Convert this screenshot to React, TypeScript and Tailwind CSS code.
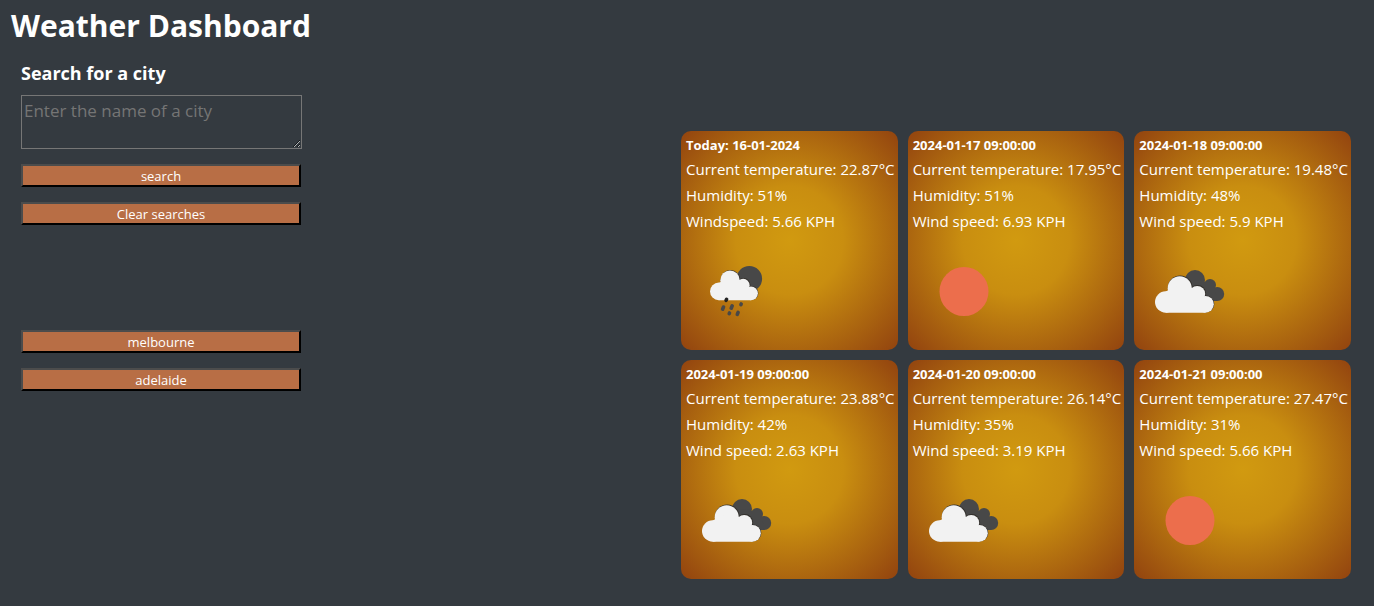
import React from "react";

type Sky = "rain" | "clear" | "clouds";

interface Forecast {
  title: string;
  temperature: string;
  humidity: string;
  windLabel: string;
  wind: string;
  sky: Sky;
}

const forecasts: Forecast[] = [
  { title: "Today: 16-01-2024", temperature: "22.87", humidity: "51", windLabel: "Windspeed", wind: "5.66", sky: "rain" },
  { title: "2024-01-17 09:00:00", temperature: "17.95", humidity: "51", windLabel: "Wind speed", wind: "6.93", sky: "clear" },
  { title: "2024-01-18 09:00:00", temperature: "19.48", humidity: "48", windLabel: "Wind speed", wind: "5.9", sky: "clouds" },
  { title: "2024-01-19 09:00:00", temperature: "23.88", humidity: "42", windLabel: "Wind speed", wind: "2.63", sky: "clouds" },
  { title: "2024-01-20 09:00:00", temperature: "26.14", humidity: "35", windLabel: "Wind speed", wind: "3.19", sky: "clouds" },
  { title: "2024-01-21 09:00:00", temperature: "27.47", humidity: "31", windLabel: "Wind speed", wind: "5.66", sky: "clear" },
];

const recentCities = ["melbourne", "adelaide"];

function CloudsIcon() {
  return (
    <>
      <g fill="#484848">
        <circle cx="56" cy="39" r="10" />
        <circle cx="71" cy="44" r="6" />
        <circle cx="78.2" cy="53" r="7" />
        <path d="M50 39 L64 40 L76 46 L78 60 L60 60 Z" />
      </g>
      <g fill="#33302c">
        <circle cx="41.2" cy="46.8" r="12.4" />
        <circle cx="58.6" cy="52.6" r="8.5" />
        <circle cx="66.8" cy="63" r="8.5" />
      </g>
      <g fill="#f2f2f2">
        <circle cx="26.7" cy="61" r="10.7" />
        <circle cx="40.7" cy="47.2" r="12" />
        <circle cx="58.2" cy="53" r="8" />
        <circle cx="66.4" cy="63.3" r="8.4" />
        <path d="M26.7 50.5 L40 44 L58 48 L67 60 L66.4 71.7 H26.7 Z" />
      </g>
    </>
  );
}

function RainIcon() {
  return (
    <>
      <circle cx="63.3" cy="37.8" r="12.8" fill="#484848" />
      <g fill="#33302c">
        <circle cx="44.4" cy="38.9" r="9.9" />
        <circle cx="57.6" cy="43.8" r="6.8" />
        <circle cx="65.4" cy="52" r="7" />
      </g>
      <g fill="#f2f2f2">
        <circle cx="32.8" cy="50.4" r="8.8" />
        <circle cx="44" cy="39.2" r="9.7" />
        <circle cx="57.2" cy="44.2" r="6.4" />
        <circle cx="65" cy="52.3" r="6.9" />
        <path d="M32.8 42 L44 36 L57 40 L65 50 V59.2 H32.8 Z" />
      </g>
      <g stroke="#484848" strokeWidth="3.6" strokeLinecap="round">
        <path d="M40.6 58.3 L40.1 59.3" stroke="#222222" />
        <path d="M37.5 66 L36.6 68.2" />
        <path d="M46.2 64.8 L45.2 67.2" />
        <path d="M55.2 63 L54.9 63.6" />
        <path d="M43.5 72 L43.2 72.6" />
        <path d="M52.1 71.4 L51.3 73.4" />
      </g>
    </>
  );
}

function WeatherIcon({ sky }: { sky: Sky }) {
  return (
    <svg viewBox="0 0 100 100" className="block size-[100px]" role="img" aria-label={sky}>
      {sky === "rain" && <RainIcon />}
      {sky === "clear" && <circle cx="51" cy="50.5" r="24.5" fill="#ec6e4c" />}
      {sky === "clouds" && <CloudsIcon />}
    </svg>
  );
}

function ForecastCard({ forecast }: { forecast: Forecast }) {
  return (
    <article className="rounded-[10px] bg-[radial-gradient(#d19a10,#c98e10_35%,#92430f)] px-[5px] pt-[3px] pb-[9px] text-[15px] leading-[26px]">
      <h2 className="text-[13px] leading-[22px] font-bold">{forecast.title}</h2>
      <p className="whitespace-nowrap">Current temperature: {forecast.temperature}°C</p>
      <p>Humidity: {forecast.humidity}%</p>
      <p>
        {forecast.windLabel}: {forecast.wind} KPH
      </p>
      <div className="pt-[7px]">
        <WeatherIcon sky={forecast.sky} />
      </div>
    </article>
  );
}

function BarButton({ children }: { children: React.ReactNode }) {
  return (
    <button
      type="button"
      className="h-[23px] w-[280px] border-2 border-t-[#4c4c4c] border-r-black border-b-black border-l-[#4c4c4c] bg-[#b86e45] pt-px text-center text-[13px] leading-[18px]"
    >
      {children}
    </button>
  );
}

export default function App() {
  return (
    <div className="min-h-screen bg-[#343a40] font-['Open_Sans','Noto_Sans',sans-serif] text-white">
      <header className="px-[11px] pt-1">
        <h1 className="text-[30px] leading-[43px] font-bold">Weather Dashboard</h1>
      </header>
      <main className="flex items-start justify-between gap-8 pr-[23px] pl-[21px]">
        <aside className="w-[281px] shrink-0 pt-[14px]">
          <form className="flex flex-col gap-[15px]" onSubmit={(event) => event.preventDefault()}>
            <div>
              <label htmlFor="city" className="block text-[18px] leading-6 font-bold">
                Search for a city
              </label>
              <textarea
                id="city"
                placeholder="Enter the name of a city"
                className="mt-[10px] block h-[54px] w-full resize border border-[#767676] bg-transparent px-0.5 py-0.5 text-[17px] leading-[25px] placeholder:text-[#757575]"
              />
            </div>
            <BarButton>search</BarButton>
            <BarButton>Clear searches</BarButton>
          </form>
          <nav aria-label="Recent searches" className="mt-[105px] flex flex-col gap-[15px]">
            {recentCities.map((city) => (
              <BarButton key={city}>{city}</BarButton>
            ))}
          </nav>
        </aside>
        <section aria-label="Forecast" className="grid w-[670px] grid-cols-3 gap-[10px] pt-[84px]">
          {forecasts.map((forecast) => (
            <ForecastCard key={forecast.title} forecast={forecast} />
          ))}
        </section>
      </main>
    </div>
  );
}
